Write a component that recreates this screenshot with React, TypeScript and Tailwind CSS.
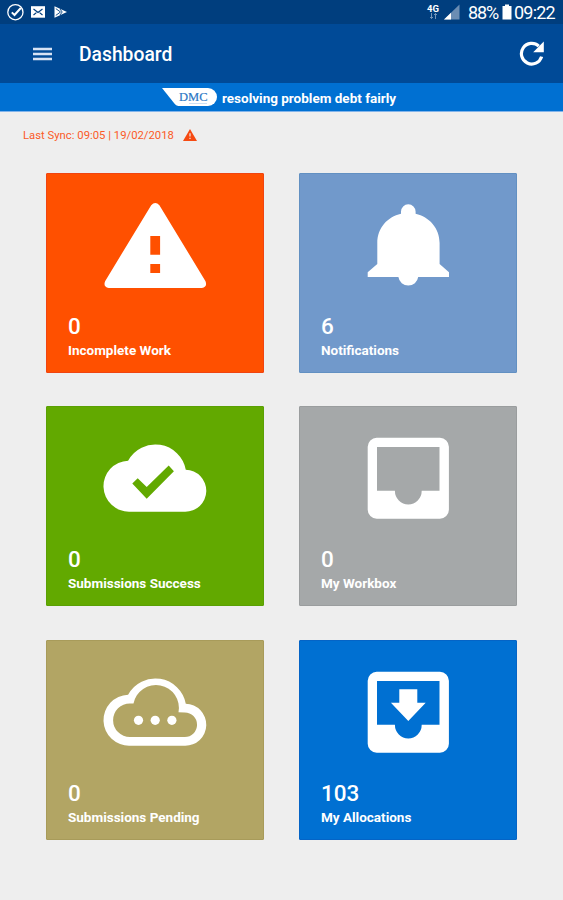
import React from 'react';

interface Tile {
  label: string;
  count: number;
  color: string;
  icon: React.ReactNode;
}

const CLOUD =
  'M28.6 87.7A25.5 25.5 0 0 1 26.8 36.7A31 31 0 0 1 84.5 45.7A21 21 0 0 1 83.5 87.7Z';
const TRAY =
  'M22.4 13.8H85.6A9 9 0 0 1 94.6 22.8V85.7A9 9 0 0 1 85.6 94.7H22.4A9 9 0 0 1 13.4 85.7V22.8A9 9 0 0 1 22.4 13.8ZM22.7 23V66.8H40.6A13.4 13.8 0 0 0 67.4 66.8H85.2V23Z';

const tiles: Tile[] = [
  {
    label: 'Incomplete Work',
    count: 0,
    color: 'bg-[#ff5000] border-[#f04410]',
    icon: (
      <path
        fillRule="evenodd"
        d="M49.9 14.2Q54 9.6 58.1 14.2L104.2 90.2Q106.4 95.8 100.6 97H7.4Q1.6 95.8 3.8 90.2ZM49 45V63.7H58.8V45ZM49 73V82H58.8V73Z"
      />
    ),
  },
  {
    label: 'Notifications',
    count: 6,
    color: 'bg-[#7199cb] border-[#6290c2]',
    icon: (
      <path d="M54 13.3A7.3 7.3 0 0 1 61.3 20.6V22.8C75 26 85.3 37 85.3 52V73L94.7 81.3V86H63.9A10 10 0 0 1 44.1 86H13.4V81.3L23 73V52C23 37 33 26 46.7 22.8V20.6A7.3 7.3 0 0 1 54 13.3Z" />
    ),
  },
  {
    label: 'Submissions Success',
    count: 0,
    color: 'bg-[#62a900] border-[#5aa004]',
    icon: (
      <path
        fillRule="evenodd"
        d={`${CLOUD}M31 59.5L36.4 54.2L45.4 63L67.4 41.5L72.6 47.2L45.4 74.7Z`}
      />
    ),
  },
  {
    label: 'My Workbox',
    count: 0,
    color: 'bg-[#a5a8a9] border-[#9a9d9e]',
    icon: <path fillRule="evenodd" d={TRAY} />,
  },
  {
    label: 'Submissions Pending',
    count: 0,
    color: 'bg-[#b2a564] border-[#a89b5a]',
    icon: (
      <>
        <path
          fillRule="evenodd"
          d={`${CLOUD}M28.6 79A16.8 16.8 0 0 1 28.6 45.4L32.2 45.6A22.8 22.8 0 0 1 77.2 54.2L83.5 54.5A12.2 12.2 0 0 1 83.5 79Z`}
        />
        <circle cx="37.2" cy="62.3" r="4.6" />
        <circle cx="53.9" cy="62.3" r="4.6" />
        <circle cx="70.6" cy="62.3" r="4.6" />
      </>
    ),
  },
  {
    label: 'My Allocations',
    count: 103,
    color: 'bg-[#0070d2] border-[#0464c6]',
    icon: (
      <>
        <path fillRule="evenodd" d={TRAY} />
        <path d="M45 31.3H63V44.7H71.4L54 63L36.6 44.7H45Z" />
      </>
    ),
  },
];

const StatusBar: React.FC = () => (
  <div className="flex h-6 items-center justify-between bg-[#003e7e] pl-[7px] pr-[8px] text-white">
    <div className="flex items-center">
      <svg className="h-[18px] w-[18px]" viewBox="0 0 18 18" fill="none" stroke="currentColor">
        <circle cx="8.4" cy="9.2" r="7.6" strokeWidth="1.3" />
        <path d="M4.8 9.4L7.5 12L13.8 5" strokeWidth="2" />
      </svg>
      <svg className="ml-[6px] h-[12px] w-[14px]" viewBox="0 0 14 12">
        <rect width="14" height="11.5" y="0.2" fill="currentColor" />
        <path d="M2.5 3L7 6.4L11.5 3M2.5 9L5.4 6.6M11.5 9L8.6 6.6" fill="none" stroke="#003e7e" strokeWidth="1.2" />
      </svg>
      <svg className="ml-[9px] h-[12px] w-[14px]" viewBox="0 0 14 12">
        <path d="M0.5 0.3L13 6L0.5 11.7Z" fill="currentColor" />
        <path d="M1.8 2.6L6.5 6L1.8 9.4M6 3L8.2 6L6 9" fill="none" stroke="#003e7e" strokeWidth="0.9" />
      </svg>
    </div>
    <div className="flex items-center">
      <div className="mb-[2px] flex w-[14px] flex-col items-center">
        <span className="text-[9.5px] font-bold leading-[9px]">4G</span>
        <svg className="h-[6px] w-[9px] opacity-45" viewBox="0 0 9 6" fill="none" stroke="currentColor">
          <path d="M2.5 0V5.5M1 4L2.5 5.5L4 4M6.5 6V0.5M5 2L6.5 0.5L8 2" />
        </svg>
      </div>
      <svg className="ml-[4px] h-[16px] w-[16px]" viewBox="0 0 16 16">
        <path d="M0 15.5L15.5 0.5V15.5Z" fill="#6b8db3" />
        <path d="M0 15.5L7 8.7V15.5Z" fill="#fff" />
      </svg>
      <span className="ml-[8px] w-[31px] whitespace-nowrap pt-[2px] text-[18px] leading-6 tracking-[-1.1px]">88%</span>
      <svg className="ml-[3px] h-[16px] w-[10px]" viewBox="0 0 10 16">
        <path d="M3 0.5H7V2H9.5V15.5H0.5V2H3Z" fill="currentColor" />
      </svg>
      <span className="ml-[2px] w-[41px] whitespace-nowrap pt-[2px] text-[18px] leading-6 tracking-[-0.8px]">09:22</span>
    </div>
  </div>
);

const App: React.FC = () => {
  return (
    <div className="min-h-[900px] w-[563px] bg-[#eeeeee] font-['Roboto',sans-serif]">
      <StatusBar />

      {/* Toolbar */}
      <header className="flex h-[59px] items-center bg-[#004a97] pl-[33px] pr-[18px] text-white">
        <svg className="h-[14px] w-[19px]" viewBox="0 0 19 14">
          <path d="M0 2H19M0 7H19M0 12H19" stroke="#d6e2f4" strokeWidth="2.4" />
        </svg>
        <h1 className="ml-[27px] pt-[2px] text-[19.3px] font-medium leading-6">Dashboard</h1>
        <svg className="ml-auto h-[26px] w-[26px]" viewBox="0 0 26 26">
          <path d="M22.6 15.6A10.3 10.3 0 1 1 19.8 5.2" fill="none" stroke="currentColor" strokeWidth="3.2" />
          <path d="M24.8 0.6V11.2H14.2Z" fill="currentColor" />
        </svg>
      </header>

      {/* Slogan strip */}
      <div className="flex h-[29px] items-center border-b border-[#82b4ea] bg-[#0070d2] pl-[162px] text-white">
        <svg className="h-[18px] w-[55px]" viewBox="0 0 55 18">
          <path d="M0 0H46A9 9 0 0 1 46 18H16.5Q14.5 18 13 16.2Z" fill="#fff" />
          <text x="17" y="13" fontFamily="Liberation Serif, serif" fontSize="13" textLength="28.5" lengthAdjust="spacingAndGlyphs" fill="#2b77c5" stroke="#2b77c5" strokeWidth="0.2">
            DMC
          </text>
          <path d="M27 15.5H45" stroke="#b8d3ef" strokeWidth="0.7" />
        </svg>
        <span className="ml-[5px] pt-px text-[13.5px] font-bold leading-4">resolving problem debt fairly</span>
      </div>

      {/* Sync info */}
      <div className="flex h-[46px] items-center pl-[23px] text-[#fb5a27]">
        <span className="w-[151px] whitespace-nowrap pt-[2px] text-[11.3px] leading-4">Last Sync: 09:05 | 19/02/2018</span>
        <svg className="ml-[9px] h-[12px] w-[14px]" viewBox="0 0 14 12">
          <path fillRule="evenodd" d="M7 0L14 12H0ZM6.4 4.2V7.5H7.6V4.2ZM6.4 8.7V9.9H7.6V8.7Z" fill="#f64a12" />
        </svg>
      </div>

      <main className="grid grid-cols-[218px_218px] gap-x-[35px] gap-y-[33.4px] pl-[46px] pt-[15px]">
        {tiles.map((tile) => (
          <section key={tile.label} className={`flex h-[200px] flex-col rounded-[1px] border text-white ${tile.color}`}>
            <svg className="mx-auto mt-[17px] h-[108px] w-[108px] shrink-0" viewBox="-0.3 0 108 108" fill="currentColor">
              {tile.icon}
            </svg>
            <div className="mt-[14px] pl-[21px]">
              <div className="text-[22.5px] font-medium leading-[26px]">{tile.count}</div>
              <div className="mt-[3px] text-[13.5px] font-bold leading-4">{tile.label}</div>
            </div>
          </section>
        ))}
      </main>
    </div>
  );
};

export default App;
